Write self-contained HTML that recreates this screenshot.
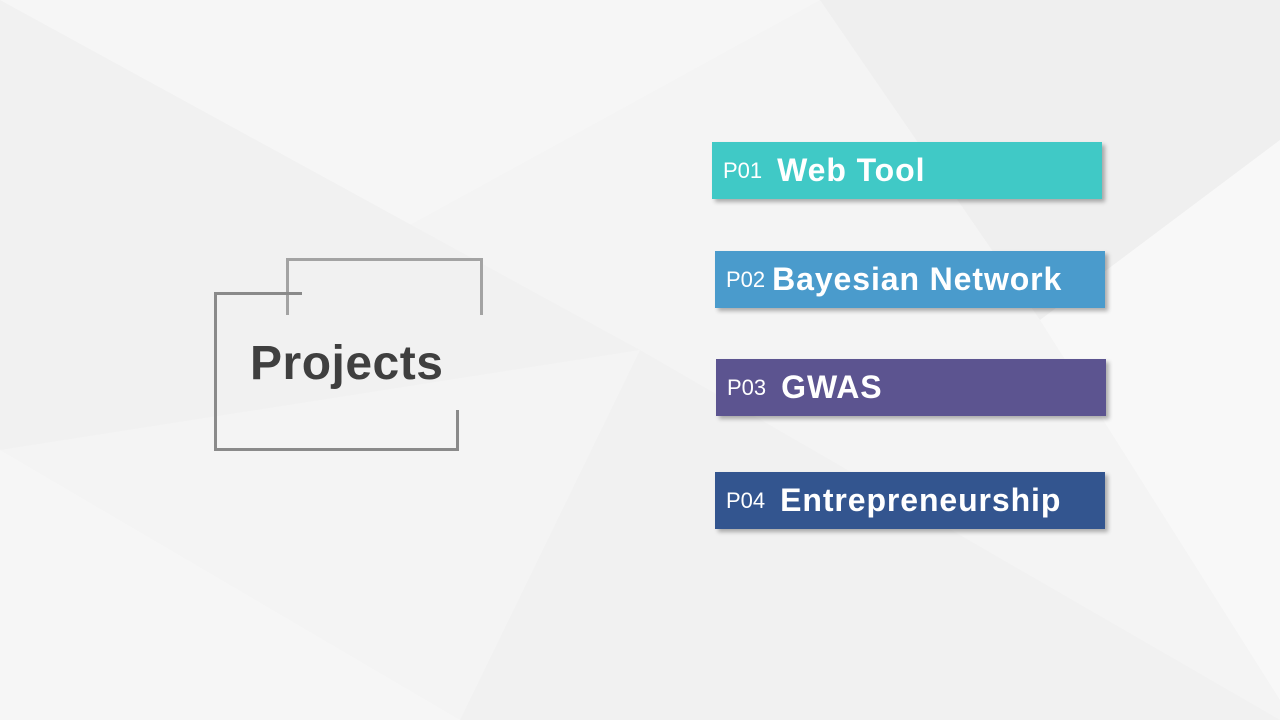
<!DOCTYPE html>
<html><head><style>
body{margin:0;width:1280px;height:720px;overflow:hidden;background:#f4f4f4;font-family:"Liberation Sans",sans-serif;position:relative}
.l{position:absolute;background:#8a8a8a}
.b{position:absolute;background:#a3a3a3}
.bar{position:absolute;height:57px;width:390px;box-shadow:3px 3px 4px rgba(0,0,0,0.3);color:#fff;display:flex;align-items:center}
.bar .p{font-size:22px;margin-left:11px;margin-right:15px}
.bar .t{font-size:32px;font-weight:bold;letter-spacing:0.9px}
</style></head><body>
<svg width="1280" height="720" style="position:absolute;left:0;top:0">
<polygon points="0,0 820,0 0,450" fill="#f6f6f6"/>
<polygon points="0,0 640,350 0,450" fill="#f1f1f1"/>
<polygon points="820,0 1280,0 1280,140 1040,320" fill="#efefef"/>
<polygon points="640,350 1280,720 460,720" fill="#f1f1f1"/>
<polygon points="1040,320 1280,140 1280,700" fill="#f8f8f8"/>
<polygon points="0,450 460,720 0,720" fill="#f6f6f6"/>
</svg>
<div class="b" style="left:287px;top:258px;width:196px;height:3px"></div>
<div class="b" style="left:286px;top:258px;width:3px;height:57px"></div>
<div class="b" style="left:480px;top:258px;width:3px;height:57px"></div>
<div class="l" style="left:214px;top:292px;width:88px;height:3px"></div>
<div class="l" style="left:214px;top:292px;width:3px;height:159px"></div>
<div class="l" style="left:214px;top:448px;width:245px;height:3px"></div>
<div class="l" style="left:456px;top:410px;width:3px;height:41px"></div>
<div style="position:absolute;left:250px;top:336px;font-size:48px;font-weight:bold;color:#3f3f3f;letter-spacing:0.5px">Projects</div>
<div class="bar" style="left:712px;top:142px;background:#40c9c6"><span class="p">P01</span><span class="t">Web Tool</span></div>
<div class="bar" style="left:715px;top:251px;background:#4a9bcc"><span class="p" style="margin-right:7px">P02</span><span class="t">Bayesian Network</span></div>
<div class="bar" style="left:716px;top:359px;background:#5c5490"><span class="p">P03</span><span class="t">GWAS</span></div>
<div class="bar" style="left:715px;top:472px;background:#33558f"><span class="p">P04</span><span class="t">Entrepreneurship</span></div>
</body></html>
